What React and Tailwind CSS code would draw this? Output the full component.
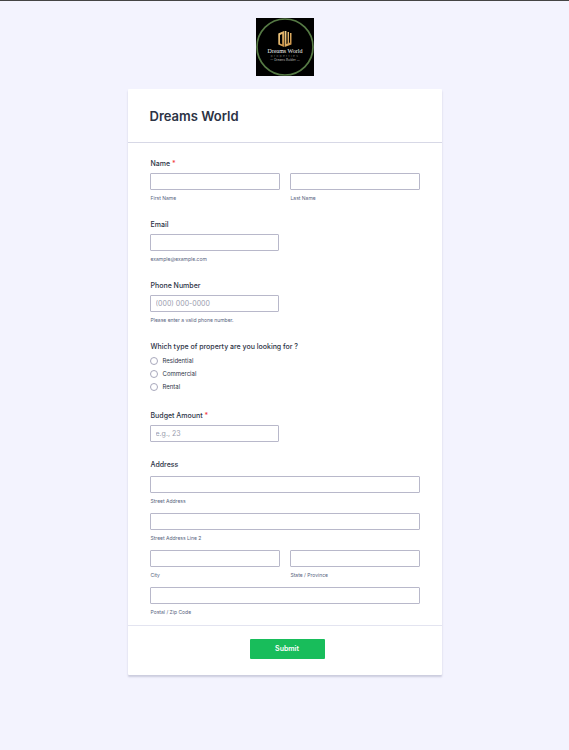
import React from "react";

const inputClass =
  "block h-[17px] w-full rounded-[1px] border border-[#b8b8ca] bg-white px-[5px] text-[7px] text-[#2c3345] outline-none placeholder:text-[#9a9dae] focus:border-blue-500";
const labelClass = "block pl-px text-[7px] leading-[10px] font-medium text-[#2c3345]";

function Required() {
  return <span className="text-[#f23a3c]"> *</span>;
}

function SubField({ id, hint, type = "text", placeholder }) {
  return (
    <div className="min-w-0 flex-1">
      <input id={id} type={type} placeholder={placeholder} className={inputClass} />
      {hint && (
        <label htmlFor={id} className="mt-1 block pl-px text-[5px] leading-[8px] text-[#57647e]">
          {hint}
        </label>
      )}
    </div>
  );
}

function Field({ id, label, required, hint, type, placeholder }) {
  return (
    <div>
      <label htmlFor={id} className={labelClass}>
        {label}
        {required && <Required />}
      </label>
      <div className="mt-1 w-[48%]">
        <SubField id={id} hint={hint} type={type} placeholder={placeholder} />
      </div>
    </div>
  );
}

function Logo() {
  return (
    <svg viewBox="0 0 58 58" className="size-[58px]" role="img" aria-label="Dreams World Properties">
      <defs>
        <linearGradient id="gold" x1="0" y1="0" x2="1" y2="1">
          <stop offset="0" stopColor="#f7d48c" />
          <stop offset="1" stopColor="#c58a3f" />
        </linearGradient>
      </defs>
      <rect width="58" height="58" fill="#000" />
      <circle cx="29" cy="29" r="28" fill="none" stroke="#567a45" strokeWidth="1.7" />
      <g fill="url(#gold)">
        <path fillRule="evenodd" d="M22.3 15.5 L28 13 V29 L22.3 26.5 Z M24 17 V25.4 L26.2 26.4 V16 Z" />
        <path fillRule="evenodd" d="M28.6 13 H30.4 V26 L31.6 25.4 V14 H33 V25 L34 24.4 V15 H35.5 V26.5 L28.6 29 Z" />
      </g>
      <text x="29" y="35" textAnchor="middle" fontFamily="Liberation Serif, serif" fontSize="6" fill="#f2f2f2">
        Dreams World
      </text>
      <text x="29" y="39" textAnchor="middle" fontFamily="Inter, sans-serif" fontSize="3" letterSpacing="1.4" fill="#777">
        properties
      </text>
      <text x="29" y="43" textAnchor="middle" fontFamily="Inter, sans-serif" fontSize="3" fill="#b5b5b5">
        — Dreams Builder —
      </text>
    </svg>
  );
}

export default function App() {
  return (
    <div className="min-h-screen border-t border-[#444] bg-[#f3f3fe] px-4 pt-[17px] pb-10 font-['Inter',sans-serif]">
      <header className="mb-[13px] flex justify-center">
        <Logo />
      </header>
      <form
        onSubmit={(e) => e.preventDefault()}
        className="mx-auto max-w-[314px] rounded-[1px] bg-white shadow-[0_2px_2px_rgba(45,50,90,0.2)]"
      >
        <div className="border-b border-[#d7d8e6] px-[22px] pt-[17px] pb-4">
          <h1 className="text-[13px] leading-5 font-semibold text-[#2c3345]">Dreams World</h1>
        </div>

        <div className="flex flex-col gap-[18px] px-[22px] pt-4 pb-[9px]">
          <fieldset>
            <legend className={labelClass}>
              Name
              <Required />
            </legend>
            <div className="mt-1 flex gap-[10px]">
              <SubField id="first" hint="First Name" />
              <SubField id="last" hint="Last Name" />
            </div>
          </fieldset>

          <Field id="email" label="Email" type="email" hint="example@example.com" />
          <Field
            id="phone"
            label="Phone Number"
            type="tel"
            placeholder="(000) 000-0000"
            hint="Please enter a valid phone number."
          />

          <fieldset>
            <legend className={labelClass}>Which type of property are you looking for ?</legend>
            <div className="mt-[2px]">
              {["Residential", "Commercial", "Rental"].map((option) => (
                <label key={option} className="flex h-[13px] items-center gap-[5px] text-[6px] text-[#2c3345]">
                  <input
                    type="radio"
                    name="property"
                    value={option}
                    className="size-2 appearance-none rounded-full border border-[#a8a8bc] bg-white checked:bg-blue-500"
                  />
                  {option}
                </label>
              ))}
            </div>
          </fieldset>

          <Field id="budget" label="Budget Amount" required placeholder="e.g., 23" />

          <fieldset className="pt-px">
            <legend className={labelClass}>Address</legend>
            <div className="mt-[5px] flex flex-col gap-2">
              <SubField id="street" hint="Street Address" />
              <SubField id="street2" hint="Street Address Line 2" />
              <div className="flex gap-[10px]">
                <SubField id="city" hint="City" />
                <SubField id="state" hint="State / Province" />
              </div>
              <SubField id="zip" hint="Postal / Zip Code" />
            </div>
          </fieldset>
        </div>

        <div className="flex justify-center border-t border-[#e3e4f0] pt-[13px] pb-4 pl-[5px]">
          <button
            type="submit"
            className="h-5 w-[75px] rounded-[1px] bg-[#18bd5b] text-[7px] font-semibold text-white"
          >
            Submit
          </button>
        </div>
      </form>
    </div>
  );
}
